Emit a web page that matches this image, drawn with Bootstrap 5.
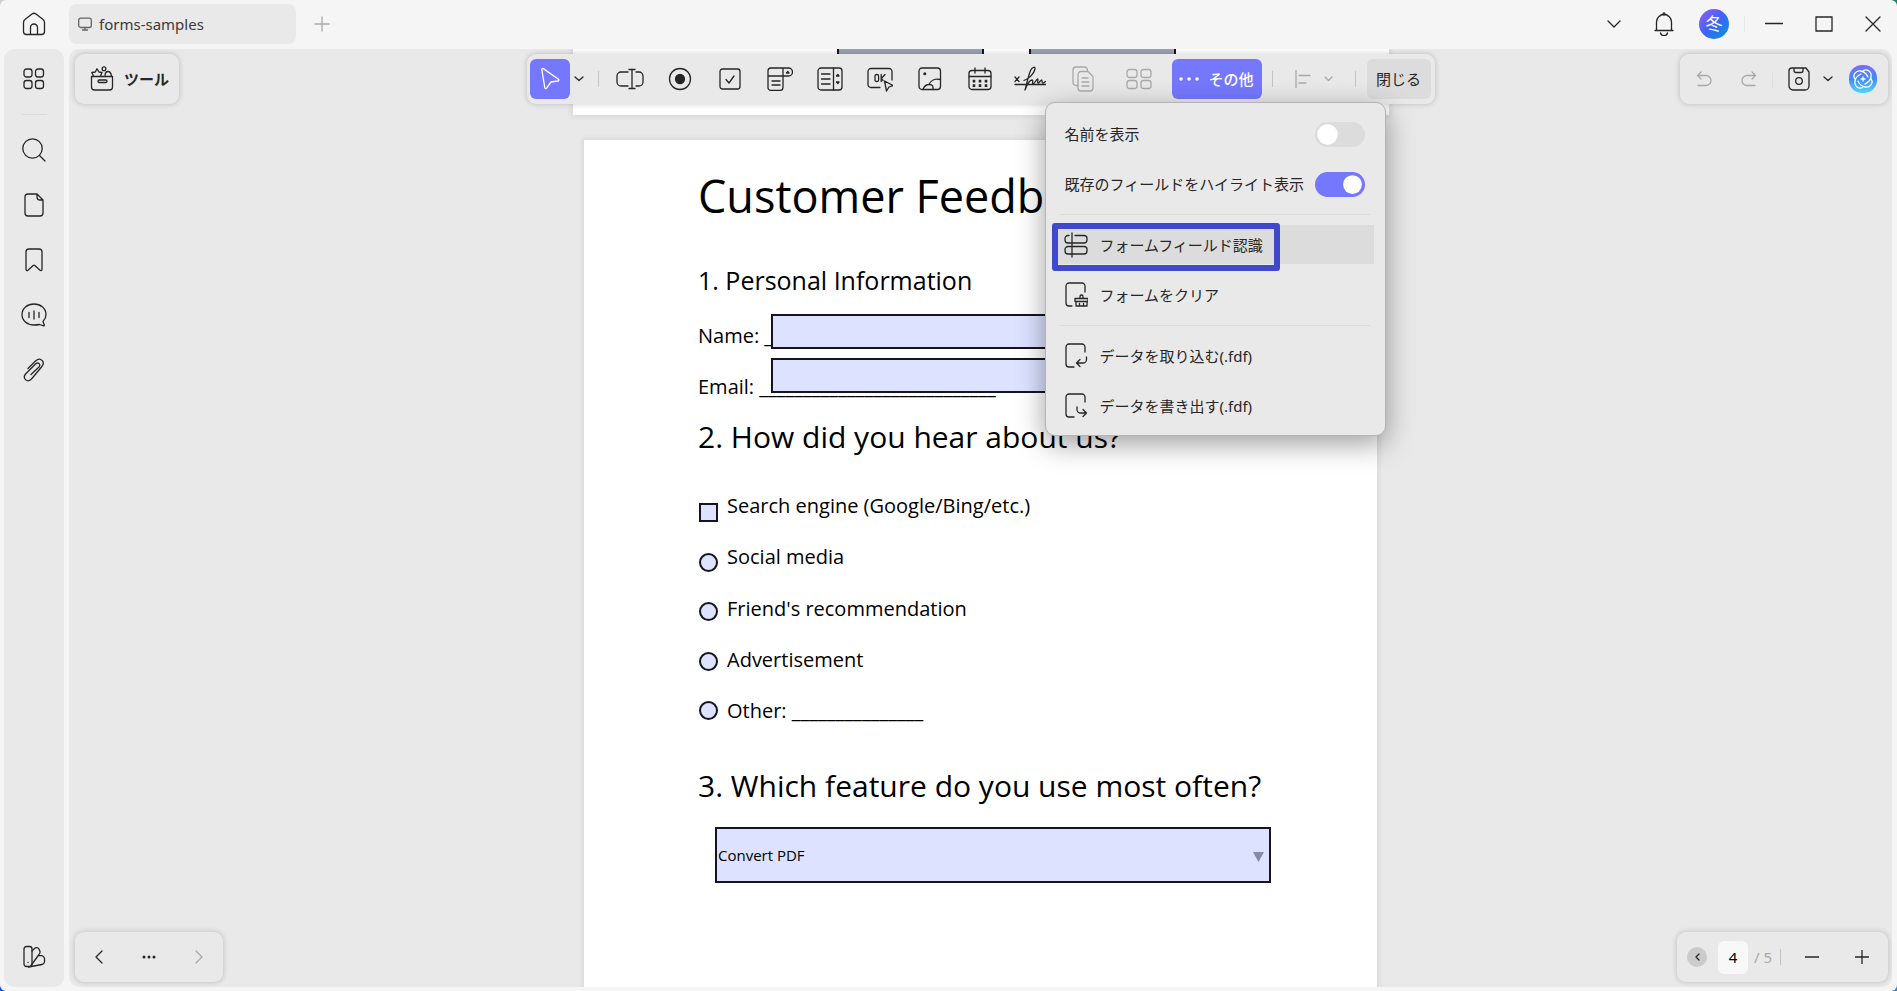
<!DOCTYPE html>
<html lang="ja">
<head>
<meta charset="utf-8">
<meta name="viewport" content="width=device-width, initial-scale=1">
<title>forms-samples</title>
<link href="https://cdn.jsdelivr.net/npm/bootstrap@5.3.0/dist/css/bootstrap.min.css" rel="stylesheet">
<style>
  :root { --ink: #262626; --panel: #e9e9e9; --accent: #7578fd; --field: #dce2ff; }
  html, body { height: 100%; }
  body {
    font-family: "Noto Sans", "Noto Sans CJK JP", sans-serif; font-size: 15px; color: var(--ink);
    background: linear-gradient(90deg, #0a4fe0 50%, #4a7fb5 50%) bottom / 100% 50% no-repeat,
                linear-gradient(90deg, #cfcfcf 50%, #1e7f6e 50%) top / 100% 50% no-repeat;
  }
  svg { display: block; fill: none; stroke: currentColor; stroke-width: 1.3; stroke-linecap: round; stroke-linejoin: round; flex: none; }
  button { background: none; border: 0; padding: 0; color: inherit; }
  .window-shell { background: #f5f5f5; border-radius: 6px; overflow: hidden; }
  .title-bar { height: 49px; }
  .home-btn { width: 67px; height: 40px; margin-right: 2px; }
  .doc-tab { width: 227px; height: 40px; background: var(--panel); border-radius: 8px; padding: 0 9px; gap: 7px; color: #3a3a3a; margin-right: 1px; }
  .doc-tab a { color: inherit; }
  .icon-50 { width: 50px; height: 40px; }
  .icon-48 { width: 48px; height: 40px; }
  .bar-rule { margin: 0 4px 0 5px; }
  .avatar { width: 30px; height: 30px; color: #fff; font-size: 17px; background: linear-gradient(135deg, #9a5cf8, #3f63f5 50%, #0098dc); }
  .side-bar { width: 60px; background: var(--panel); border-radius: 10px; margin-left: 4px; padding: 2px 0 3px; }
  .side-bar button { width: 60px; height: 55px; }
  .side-rule { width: 25px; height: 1px; background: #dcdcdc; margin: 8px 0 7px; }
  .workspace { background: var(--panel); border-radius: 10px; margin: 0 5px; }
  .work-row { padding-bottom: 4px; }
  .floating { background: var(--panel); border-radius: 9px; height: 50px; box-shadow: 0 0 5px 1px rgba(0,0,0,.15); z-index: 3; }
  .from-top { top: 5px; }
  .from-bottom { bottom: 5px; }
  .tools-btn { left: 6px; width: 104px; gap: 10px; padding-left: 15px; }
  .tools-label { font-weight: 600; font-family: "Noto Sans CJK JP", sans-serif; }
  .history-bar { right: 4px; width: 208px; padding: 0 10px 0 16px; }
  .nav-bar-left { left: 6px; width: 148px; padding: 0 20px; }
  .zoom-bar { right: 4px; width: 211px; padding: 0 19px 0 10px; }
  .v-rule { width: 1px; height: 16px; background: #c4c4c4; flex: none; }
  .form-bar { left: 50%; width: 908px; margin-left: -454px; padding: 0 4px 0 3px; }
  .form-bar .tool { width: 50px; height: 40px; }
  .form-bar .tool-wide { width: 56px; height: 40px; }
  .first-rule { margin: 0 6px 0 10px; }
  .tool-active { width: 40px; height: 40px; background: var(--accent); border-radius: 6px; color: #fff; }
  .more-btn { width: 90px; height: 40px; background: var(--accent); border-radius: 6px; color: #fff; gap: 9px; font-weight: 500; font-family: "Noto Sans CJK JP", sans-serif; margin-right: 10px; }
  .align-btn { gap: 13px; margin: 0 22px; }
  .close-btn { width: 64px; height: 40px; background: #dcdcdc; border-radius: 6px; margin-left: 11px; }
  .dim { color: #a9a9a9; }
  .more-menu { display: block; top: 48px; right: 49px; left: auto; width: 341px; min-width: 0; padding: 6px 11px 4px 6px; background: var(--panel); border: 1px solid #b4b4b4; border-radius: 10px; box-shadow: 0 8px 28px rgba(0,0,0,.38); font-size: 15px; color: var(--ink); }
  .menu-row { height: 50px; padding-left: 13px; }
  .menu-row .form-check-input { width: 50px; height: 25px; margin: 0 9px 0 0; border: 0; background-color: #dcdcdc; --bs-form-switch-bg: url("data:image/svg+xml,%3csvg xmlns='http://www.w3.org/2000/svg' viewBox='-4 -4 8 8'%3e%3ccircle r='3.3' fill='%23fff'/%3e%3c/svg%3e"); }
  .menu-row .form-check-input:checked { background-color: var(--accent); }
  .menu-rule { height: 1px; margin: 5px 4px 5px 8px; background: #dcdcdc; }
  .menu-item { width: 100%; height: 50px; padding-left: 12px; gap: 12px; }
  .menu-hot { background: linear-gradient(#dcdcdc, #dcdcdc) 0 5px / 100% 39px no-repeat; border-radius: 6px; }
  .marker { width: 228px; height: 48px; border: 6px solid #4048cc; border-radius: 3px; left: 0; top: 3px; }
  .sheet { background: #fff; box-shadow: 0 0 5px 2px rgba(0,0,0,.07); color: #000; font-family: "Open Sans", "Noto Sans", sans-serif; }
  .sheet-prev { width: 816px; height: 66px; gap: 45px; padding-left: 264px; }
  .field-piece { width: 147px; height: 36px; background: #9ba0b8; border: solid #15151f; border-width: 0 2px; }
  .sheet-main { width: 793px; height: 900px; margin-top: 25px; padding: 26px 0 0 114px; font-size: 20px; line-height: 30px; }
  .sheet-main h1 { font-size: 45px; line-height: 60px; margin: 0 0 36px; font-weight: 400; }
  .sheet-main h2 { font-size: 25px; line-height: 36px; margin: 0 0 23px; font-weight: 400; }
  .sheet-main h3 { font-size: 30px; line-height: 42px; margin: 0; font-weight: 400; }
  .line-field { height: 30px; }
  .line-field input { left: 73px; bottom: 2px; width: 480px; height: 35px; border: 2px solid #15151f; border-radius: 0; background: var(--field); }
  .line-field-low { margin: 21px 0 14px; }
  .line-field-low input { bottom: 9px; }
  .answers { height: 235px; gap: 8px; margin: 33px 0 39px; }
  .answers input { appearance: none; width: 19px; height: 19px; margin: 0; border: 2px solid #15151f; background: var(--field); }
  .answers input[type=radio] { border-radius: 50%; }
  .tick-col { padding: 12px 0 6px 1px; width: 21px; }
  .feature { margin: 20px 0 0 17px; width: 556px; }
  .feature select { appearance: none; width: 100%; height: 56px; border: 2px solid #15151f; border-radius: 0; background: var(--field); font-size: 15px; padding: 0 1px; color: #000; }
  .feature svg { right: 7px; top: 25px; }
  .page-box { width: 30px; height: 33px; border: 0; border-radius: 6px; background: #f8f8f8; text-align: center; padding: 0; margin: 0 6px 0 11px; }
  .round-btn { width: 20px; height: 20px; border-radius: 50%; background: #cbcbcb; }
  .gap-before-redo { margin-left: 29px; }
  .gap-mid { margin-left: 15px; }
  .gap-small { margin-left: 13px; }
</style>
</head>
<body>
<div class="window-shell vh-100 d-flex flex-column">
  <header class="title-bar d-flex align-items-start pt-1 flex-shrink-0">
    <button class="home-btn d-flex align-items-center justify-content-center" aria-label="ホーム">
      <svg width="24" height="24" viewBox="0 0 24 24"><path d="M4.500 22.500h15a3 3 0 0 0 3-3V10.500a4 4 0 0 0-1.700-3.200L14 2a3.400 3.400 0 0 0-4 0L3.200 7.300A4 4 0 0 0 1.500 10.500v9a3 3 0 0 0 3 3zM8.500 22.500V15.500a3.500 3.500 0 0 1 7 0v7"/></svg>
    </button>
    <div class="doc-tab d-flex align-items-center">
      <svg class="opacity-75" width="14" height="14" viewBox="0 0 14 14"><rect x=".7" y="1.200" width="12.600" height="9.300" rx="2"/><path d="M7 10.500V13M4.500 13h5"/></svg>
      <a href="#" class="text-decoration-none">forms-samples</a>
    </div>
    <button class="icon-50 d-flex align-items-center justify-content-center dim" aria-label="新しいタブ">
      <svg width="16" height="16" viewBox="0 0 16 16"><path d="M8 1v14M1 8h14"/></svg>
    </button>
    <div class="ms-auto d-flex align-items-center">
      <button class="icon-50 d-flex align-items-center justify-content-center" aria-label="タブ一覧"><svg width="14" height="8" viewBox="0 0 14 8"><path d="M1 1l6 6 6-6"/></svg></button>
      <button class="icon-50 d-flex align-items-center justify-content-center" aria-label="通知"><svg width="20" height="24" viewBox="0 0 20 24"><path d="M1 18.500h18M2.500 18.500V10a7.500 7.500 0 0 1 15 0v8.500M6.500 21a3.600 3.600 0 0 0 7 0"/><circle cx="10" cy="1.800" r="1"/></svg></button>
      <div class="icon-50 d-flex align-items-center justify-content-center"><span class="avatar rounded-circle d-flex align-items-center justify-content-center">冬</span></div>
      <div class="v-rule bar-rule opacity-25"></div>
      <button class="icon-50 d-flex align-items-center justify-content-center" aria-label="最小化"><svg width="18" height="4" viewBox="0 0 18 4"><path d="M.5 1.500h17"/></svg></button>
      <button class="icon-50 d-flex align-items-center justify-content-center" aria-label="最大化"><svg width="18" height="16" viewBox="0 0 18 16"><path stroke-linejoin="miter" d="M1 1h16v14H1z"/></svg></button>
      <button class="icon-48 d-flex align-items-center justify-content-center" aria-label="閉じる"><svg width="16" height="16" viewBox="0 0 16 16"><path d="M1 1l14 14M15 1L1 15"/></svg></button>
    </div>
  </header>

  <div class="work-row d-flex flex-grow-1 overflow-hidden">
    <nav class="side-bar d-flex flex-column align-items-center flex-shrink-0">
      <button class="d-flex align-items-center justify-content-center" aria-label="一覧"><svg width="22" height="22" viewBox="0 0 22 22"><rect x="1" y="1" width="8" height="8" rx="2.500"/><rect x="12.500" y="1" width="8" height="8" rx="2.500"/><rect x="1" y="12.500" width="8" height="8" rx="2.500"/><rect x="12.500" y="12.500" width="8" height="8" rx="2.500"/></svg></button>
      <div class="side-rule"></div>
      <button class="d-flex align-items-center justify-content-center" aria-label="検索"><svg width="24" height="24" viewBox="0 0 24 24"><circle cx="10.500" cy="10.500" r="9.700"/><path d="M17.500 17.500l5.500 5.500"/></svg></button>
      <button class="d-flex align-items-center justify-content-center" aria-label="ページ"><svg width="20" height="24" viewBox="0 0 20 24"><path d="M13 1H4a3 3 0 0 0-3 3v16a3 3 0 0 0 3 3h12a3 3 0 0 0 3-3V7zM13 1v3a3 3 0 0 0 3 3h3"/></svg></button>
      <button class="d-flex align-items-center justify-content-center" aria-label="しおり"><svg width="18" height="24" viewBox="0 0 18 24"><path d="M4 1h10a3 3 0 0 1 3 3v17.500a1.200 1.200 0 0 1-2 .8L9.800 17.500a1.200 1.200 0 0 0-1.600 0L3 22.300a1.200 1.200 0 0 1-2-.8V4a3 3 0 0 1 3-3z"/></svg></button>
      <button class="d-flex align-items-center justify-content-center" aria-label="コメント"><svg width="26" height="24" viewBox="0 0 26 24"><path d="M22 18.500c2-2 3-4.300 3-7C25 5.500 19.800 1 13 1S1 5.500 1 11.500 6 22 13 22c2 0 3.800-.2 5.500-.5l4.200 1.300c.5 0 .8-.4.600-.9zM8 9.500v5M13 8v8M18 9.500v5"/></svg></button>
      <button class="d-flex align-items-center justify-content-center" aria-label="添付"><svg width="22" height="24" viewBox="0 0 22 24"><path d="M5 10.500L12.500 3c5-4.500 10.500 1 6 6L8.500 21C4 25.500-1 20 2.800 15.800L12.500 6c3-2.500 5.500.5 3.500 3L8 16.500"/></svg></button>
      <button class="mt-auto d-flex align-items-center justify-content-center" aria-label="パレット"><svg width="24" height="24" viewBox="0 0 24 24"><rect x="2" y="1.500" width="8" height="20" rx="2.500"/><path d="M10 6l2.500-2.500a3 3 0 0 1 4.500.5l1 2.500a3 3 0 0 1-1 3L9 20.500M16.500 10.500l3 .2a3.400 3.400 0 0 1 3 4v2.300a3 3 0 0 1-2.500 2.500L6.500 22"/><path d="M6 17.500v.1"/></svg></button>
    </nav>

    <main class="workspace flex-grow-1 position-relative overflow-hidden">
      <div class="d-flex flex-column align-items-center">
        <section class="sheet sheet-prev d-flex flex-shrink-0"><div class="field-piece"></div><div class="field-piece"></div></section>
        <section class="sheet sheet-main flex-shrink-0">
          <h1>Customer Feedback</h1>
          <h2>1. Personal Information</h2>
          <div class="line-field position-relative"><label for="f-name">Name: _</label><input id="f-name" type="text" class="position-absolute"></div>
          <div class="line-field line-field-low position-relative"><label for="f-mail">Email: ___________________________</label><input id="f-mail" type="text" class="position-absolute"></div>
          <h3>2. How did you hear about us?</h3>
          <div class="answers d-flex">
            <div class="tick-col d-flex flex-column justify-content-between">
              <input type="checkbox" id="a1"><input type="radio" name="src" id="a2"><input type="radio" name="src" id="a3"><input type="radio" name="src" id="a4"><input type="radio" name="src" id="a5">
            </div>
            <div class="d-flex flex-column justify-content-between">
              <label for="a1">Search engine (Google/Bing/etc.)</label>
              <label for="a2">Social media</label>
              <label for="a3">Friend's recommendation</label>
              <label for="a4">Advertisement</label>
              <label for="a5">Other: _______________</label>
            </div>
          </div>
          <h3><label for="feature">3. Which feature do you use most often?</label></h3>
          <div class="feature position-relative">
            <select id="feature"><option>Convert PDF</option></select>
            <svg class="position-absolute pe-none" width="11" height="10" viewBox="0 0 11 10"><path d="M0 0h11L5.500 10z" fill="#858ba6" stroke="none"/></svg>
          </div>
        </section>
      </div>

      <button class="floating from-top tools-btn position-absolute d-flex align-items-center">
        <svg width="24" height="26" viewBox="0 0 24 26" stroke-width="1.500"><path d="M1.500 10.500v10.500a3 3 0 0 0 3 3h15a3 3 0 0 0 3-3V10.500zM3.500 10L1.800 6.500l3.500-.5L7 2.800l2 3.200 3 .5-1.500 3.500M15 10c0-3 1.500-4.500 3-4.500s3 1.500 3.500 4.500"/><circle cx="14" cy="2.800" r="1.900"/><rect x="8" y="14" width="9" height="2.500" rx="1.200"/></svg>
        <span class="tools-label">ツール</span>
      </button>

      <div class="floating from-top form-bar position-absolute d-flex align-items-center">
        <button class="tool-active d-flex align-items-center justify-content-center flex-shrink-0" aria-label="選択"><svg width="20" height="24" viewBox="0 0 20 24"><path d="M1.800 2.500l3 18.200c.2 1 1.200 1.200 1.800.4L11 15l7-1c1-.2 1.300-1.200.5-1.800L3.300 1.600c-.8-.5-1.600 0-1.500.9z"/></svg></button>
        <button class="px-1" aria-label="選択メニュー"><svg width="10" height="6" viewBox="0 0 10 6" stroke-width="1.600"><path d="M1 1l4 3.500L9 1"/></svg></button>
        <div class="v-rule first-rule"></div>
        <button class="tool d-flex align-items-center justify-content-center" aria-label="テキスト"><svg width="28" height="22" viewBox="0 0 28 22"><path d="M12 4H5a4 4 0 0 0-4 4v6a4 4 0 0 0 4 4h7M20 4h3a4 4 0 0 1 4 4v6a4 4 0 0 1-4 4h-3M13 1.500h6M13 20.500h6M16 1.500v19"/></svg></button>
        <button class="tool d-flex align-items-center justify-content-center" aria-label="ラジオボタン"><svg width="24" height="24" viewBox="0 0 24 24"><circle cx="12" cy="12" r="10.500"/><circle cx="12" cy="12" r="4.500" fill="currentColor"/></svg></button>
        <button class="tool d-flex align-items-center justify-content-center" aria-label="チェックボックス"><svg width="22" height="22" viewBox="0 0 22 22"><rect x="1" y="1" width="20" height="20" rx="2.500"/><path d="M7 11.500l3 3.500 5-7"/></svg></button>
        <button class="tool d-flex align-items-center justify-content-center" aria-label="ドロップダウン"><svg width="26" height="24" viewBox="0 0 26 24"><path d="M16 9v11.500a3 3 0 0 1-3 3H4a3 3 0 0 1-3-3V4a3 3 0 0 1 3-3h17.500a4 4 0 0 1 0 8H1M16 1v8M5 14h8M5 18h8"/><path d="M19.500 6h2.500l-1.200-1.500z" fill="currentColor"/></svg></button>
        <button class="tool d-flex align-items-center justify-content-center" aria-label="リストボックス"><svg width="26" height="24" viewBox="0 0 26 24"><rect x="1" y="1" width="24" height="22" rx="3"/><path d="M16.500 1v22M4.500 7h8.500M4.500 12h8.500M4.500 17h8.500"/><path d="M19.500 9h2.500l-1.200-1.500zM19.500 15h2.500l-1.200 1.500z" fill="currentColor"/></svg></button>
        <button class="tool d-flex align-items-center justify-content-center" aria-label="ボタン"><svg width="26" height="26" viewBox="0 0 26 26"><path d="M13 21.500H4a3 3 0 0 1-3-3v-13a3 3 0 0 1 3-3h18a3 3 0 0 1 3 3V14M17.500 15l2 10 2.500-4 4-1.500z"/><rect x="8" y="8.500" width="3.600" height="7" rx="1.500"/><path d="M14.200 8.500v7M18 8.500l-3.700 4 1.700 2"/></svg></button>
        <button class="tool d-flex align-items-center justify-content-center" aria-label="画像"><svg width="24" height="24" viewBox="0 0 24 24"><rect x="1" y="1" width="21.500" height="21.500" rx="3"/><path d="M5 22.500c1-3 3.500-5 6.500-5s4 2 3.500 5M11 17.500c1.500-4 6-6 11.500-5"/><circle cx="6.800" cy="6.800" r=".9" fill="currentColor"/></svg></button>
        <button class="tool d-flex align-items-center justify-content-center" aria-label="日付"><svg width="24" height="24" viewBox="0 0 24 24"><rect x="1" y="3.500" width="22" height="19" rx="3"/><path d="M1 9.500h22M7 1v5M17 1v5"/><path stroke-width="2.600" d="M6 14v.1M12 14v.1M18 14v.1M6 18.500v.1M12 18.500v.1M18 18.500v.1" stroke-linecap="square"/></svg></button>
        <button class="tool d-flex align-items-center justify-content-center" aria-label="署名"><svg width="32" height="26" viewBox="0 0 32 26"><path d="M1 11l4 4.500M5 11l-4 4.500M1 18.500h31" /><path d="M10 14.500c5-1.500 10-7 11-11.500.5-2.500-2.500-2.500-4.500 1.500-2 5-4 14-5.500 19.500 2-6 4.500-9.500 7-10 1.500 0 0 3.500 1 4 1.500 0 3-4.500 4.500-5 1 0-.5 3.500.5 4s2-2.500 3.500-3c1 0 0 2.500 1 3s2-1 3-1.500"/></svg></button>
        <button class="tool-wide d-flex align-items-center justify-content-center dim" aria-label="複製"><svg width="22" height="26" viewBox="0 0 22 26"><path d="M5.500 19.500H4a3 3 0 0 1-3-3V4a3 3 0 0 1 3-3h8.500a3 3 0 0 1 3 3v1.500"/><path d="M9 5.500h7l5 5v11.500a3 3 0 0 1-3 3H9a3 3 0 0 1-3-3V8.500a3 3 0 0 1 3-3zM10 12h6M10 16h7M10 20h7"/></svg></button>
        <button class="tool-wide d-flex align-items-center justify-content-center dim" aria-label="配置"><svg width="26" height="22" viewBox="0 0 26 22"><rect x="1" y="1.500" width="10" height="8" rx="2.500"/><rect x="15" y="1.500" width="10" height="8" rx="2.500"/><rect x="1" y="12.500" width="10" height="8" rx="2.500"/><rect x="15" y="12.500" width="10" height="8" rx="2.500"/></svg></button>
        <button class="more-btn d-flex align-items-center justify-content-center ms-auto" aria-expanded="true"><svg width="20" height="4" viewBox="0 0 20 4"><g fill="currentColor" stroke="none"><circle cx="2" cy="2" r="1.800"/><circle cx="10" cy="2" r="1.800"/><circle cx="18" cy="2" r="1.800"/></g></svg>その他</button>
        <div class="v-rule"></div>
        <button class="align-btn d-flex align-items-center dim" aria-label="整列"><svg width="16" height="18" viewBox="0 0 16 18" stroke-width="1.500"><path d="M1 0v18M4 5.500h11M4 13h7" /></svg><svg width="9" height="6" viewBox="0 0 9 6"><path d="M1 1l3.500 3.500L8 1"/></svg></button>
        <div class="v-rule"></div>
        <button class="close-btn">閉じる</button>

        <div class="more-menu dropdown-menu">
          <div class="menu-row d-flex align-items-center justify-content-between form-switch"><label for="show-name">名前を表示</label><input class="form-check-input" type="checkbox" role="switch" id="show-name"></div>
          <div class="menu-row d-flex align-items-center justify-content-between form-switch"><label for="show-fields">既存のフィールドをハイライト表示</label><input class="form-check-input" type="checkbox" role="switch" id="show-fields" checked></div>
          <div class="menu-rule"></div>
          <div class="position-relative">
            <button class="menu-item menu-hot d-flex align-items-center"><svg width="24" height="26" viewBox="0 0 24 26"><path d="M8 1v24M5 3.500H4a3 3 0 0 0-3 3V8a3 3 0 0 0 3 3h16a3 3 0 0 0 3-3V6.500a3 3 0 0 0-3-3h-9M5 14.500H4a3 3 0 0 0-3 3V19a3 3 0 0 0 3 3h16a3 3 0 0 0 3-3v-1.500a3 3 0 0 0-3-3H5"/></svg>フォームフィールド認識</button>
            <div class="marker position-absolute pe-none"></div>
          </div>
          <button class="menu-item d-flex align-items-center"><svg width="24" height="26" viewBox="0 0 24 26"><path d="M21 10V4a3 3 0 0 0-3-3H5a3 3 0 0 0-3 3v17a3 3 0 0 0 3 3h3M11 16.500h13v3H11zM12 19.500V24h11v-4.500M15.500 24v-2.500M19.500 24v-2.500M16 16.500v-2a1.500 1.500 0 0 1 3 0v2"/></svg>フォームをクリア</button>
          <div class="menu-rule"></div>
          <button class="menu-item d-flex align-items-center"><svg width="24" height="26" viewBox="0 0 24 26"><path d="M21 9V4a3 3 0 0 0-3-3H5a3 3 0 0 0-3 3v17a3 3 0 0 0 3 3h5M22.500 14v2.500a3.500 3.500 0 0 1-3.500 3.500h-6M16 16.500l-3.500 3.500 3.500 3.500"/></svg>データを取り込む(.fdf)</button>
          <button class="menu-item d-flex align-items-center"><svg width="24" height="26" viewBox="0 0 24 26"><path d="M21 9V4a3 3 0 0 0-3-3H5a3 3 0 0 0-3 3v17a3 3 0 0 0 3 3h5M13 14v2.500a3.500 3.500 0 0 0 3.500 3.500h6M19 16.500l3.500 3.500-3.500 3.500"/></svg>データを書き出す(.fdf)</button>
        </div>
      </div>

      <div class="floating from-top history-bar position-absolute d-flex align-items-center">
        <button class="dim" aria-label="元に戻す"><svg width="16" height="16" viewBox="0 0 16 16"><path d="M5 1L1.500 4.500 5 8M1.500 4.500H10a5 5 0 0 1 0 10H2"/></svg></button>
        <button class="dim gap-before-redo" aria-label="やり直し"><svg width="16" height="16" viewBox="0 0 16 16"><path d="M11 1l3.500 3.500L11 8M14.500 4.500H6a5 5 0 0 0 0 10h8"/></svg></button>
        <div class="v-rule opacity-25 gap-mid"></div>
        <button class="gap-mid" aria-label="保存"><svg width="22" height="24" viewBox="0 0 22 24"><path d="M4 1h14l3 4v14a4 4 0 0 1-4 4H5a4 4 0 0 1-4-4V4a3 3 0 0 1 3-3zM6 1v2.500a2 2 0 0 0 2 2h5a2 2 0 0 0 2-2V1"/><circle cx="11" cy="14" r="3.300"/></svg></button>
        <button class="gap-small" aria-label="保存メニュー"><svg width="10" height="6" viewBox="0 0 10 6" stroke-width="1.600"><path d="M1 1l4 3.500L9 1"/></svg></button>
        <button class="ms-auto" aria-label="AI"><svg width="30" height="30" viewBox="0 0 30 30"><defs><linearGradient id="ai" x1="0" y1="0" x2="0" y2="1"><stop offset="0" stop-color="#7c6cf8"/><stop offset=".5" stop-color="#3f8cf8"/><stop offset="1" stop-color="#4fd6f8"/></linearGradient></defs><rect x="1" y="1" width="28" height="28" rx="13" fill="url(#ai)" stroke="none"/><g stroke="#fff"><path d="M15 7c4-3 9 1 8 6s-4 6-6 7"/><path d="M15 7c4-3 9 1 8 6s-4 6-6 7" transform="rotate(90 15 15)"/><path d="M15 7c4-3 9 1 8 6s-4 6-6 7" transform="rotate(180 15 15)"/><path d="M15 7c4-3 9 1 8 6s-4 6-6 7" transform="rotate(270 15 15)"/><path d="M15 13v4M13 15h4"/></g></svg></button>
      </div>

      <div class="floating from-bottom nav-bar-left position-absolute d-flex align-items-center justify-content-between">
        <button aria-label="前へ"><svg width="8" height="14" viewBox="0 0 8 14"><path d="M7 1L1 7l6 6"/></svg></button>
        <button aria-label="メニュー"><svg width="14" height="4" viewBox="0 0 14 4"><g fill="currentColor" stroke="none"><circle cx="2" cy="2" r="1.500"/><circle cx="7" cy="2" r="1.500"/><circle cx="12" cy="2" r="1.500"/></g></svg></button>
        <button class="dim" aria-label="次へ"><svg width="8" height="14" viewBox="0 0 8 14"><path d="M1 1l6 6-6 6"/></svg></button>
      </div>

      <div class="floating from-bottom zoom-bar position-absolute d-flex align-items-center">
        <button class="round-btn d-flex align-items-center justify-content-center" aria-label="前のページ"><svg width="5" height="8" viewBox="0 0 5 8" stroke-width="1.600"><path d="M4 1L1 4l3 3"/></svg></button>
        <input class="page-box" type="text" value="4" aria-label="ページ番号">
        <span class="dim">/ 5</span>
        <div class="v-rule ms-2"></div>
        <button class="ms-4" aria-label="縮小"><svg width="14" height="14" viewBox="0 0 14 14"><path d="M0 7h14"/></svg></button>
        <button class="ms-auto" aria-label="拡大"><svg width="14" height="14" viewBox="0 0 14 14"><path d="M0 7h14M7 0v14"/></svg></button>
      </div>
    </main>
  </div>
</div>
<script src="https://cdn.jsdelivr.net/npm/bootstrap@5.3.0/dist/js/bootstrap.bundle.min.js"></script>
</body>
</html>
